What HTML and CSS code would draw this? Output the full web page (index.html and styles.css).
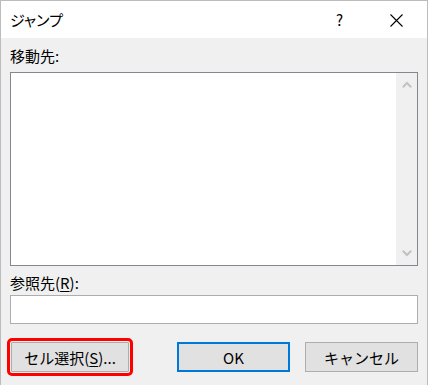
FILE: index.html
```html
<!DOCTYPE html>
<html lang="ja">
<head>
  <meta charset="UTF-8">
  <title>ジャンプ</title>
  <link rel="stylesheet" href="styles.css">
</head>
<body>
  <div class="dialog">
    <div class="title-bar">
      <span class="title">ジャンプ</span>
      <span class="help">?</span>
      <span class="close">
        <svg width="13" height="13" viewBox="0 0 13 13">
          <path d="M0.5 0.5 L12.5 12.5 M12.5 0.5 L0.5 12.5" stroke="#000" stroke-width="1.1" fill="none"/>
        </svg>
      </span>
    </div>

    <div class="content">
      <div class="label goto-label">移動先:</div>
      <div class="listbox">
        <div class="list-area"></div>
        <div class="scrollbar">
          <svg width="10" height="7" viewBox="0 0 10 7">
            <path d="M0.8 6.2 L5 2 L9.2 6.2" stroke="#c2c2c2" stroke-width="2" fill="none"/>
          </svg>
          <svg width="10" height="7" viewBox="0 0 10 7">
            <path d="M0.8 0.8 L5 5 L9.2 0.8" stroke="#c2c2c2" stroke-width="2" fill="none"/>
          </svg>
        </div>
      </div>

      <div class="label ref-label">参照先(<u>R</u>):</div>
      <div class="ref-input"></div>

      <div class="buttons">
        <button class="btn btn-special">セル選択(<u>S</u>)...</button>
        <button class="btn btn-ok">OK</button>
        <button class="btn btn-cancel">キャンセル</button>
      </div>
    </div>
  </div>
</body>
</html>
```

FILE: styles.css
```css
/* Base */
body {
  margin: 0;
  padding: 0;
  font-family: "Noto Sans CJK JP", "Noto Sans", sans-serif;
  font-feature-settings: "palt";
  color: #000;
  background-color: #f0f0f0;
}

.dialog {
  width: 428px;
  height: 385px;
  box-sizing: border-box;
  border: 1px solid #bcbcbc;
  border-bottom: none;
  background-color: #f0f0f0;
  display: flex;
  flex-direction: column;
}

/* Title bar */
.title-bar {
  height: 37px;
  background-color: #fff;
  display: flex;
  align-items: center;
  padding-left: 9px;
}

.title {
  font-size: 15px;
  flex: 1;
}

.help {
  font-size: 15px;
  width: 12px;
  margin-right: 42px;
}

.close {
  display: flex;
  width: 13px;
  height: 13px;
  margin-right: 24px;
  margin-top: 1px;
}

/* Dialog content */
.content {
  padding: 7px 9px 0 9px;
  display: flex;
  flex-direction: column;
}

.label {
  font-size: 15px;
  height: 22px;
  line-height: 22px;
}

.goto-label {
  margin-bottom: 5px;
}

.ref-label {
  margin-top: 6px;
  margin-bottom: 1px;
}

.label u {
  text-underline-offset: 2px;
}

/* List box */
.listbox {
  height: 194px;
  box-sizing: border-box;
  border: 1px solid #828790;
  background-color: #fff;
  display: flex;
}

.list-area {
  flex: 1;
}

.scrollbar {
  width: 21px;
  background-color: #f0f0f0;
  display: flex;
  flex-direction: column;
  justify-content: space-between;
  align-items: center;
  padding: 8px 0;
}

.ref-input {
  height: 29px;
  box-sizing: border-box;
  border: 1px solid #adadad;
  background-color: #fff;
}

/* Buttons */
.buttons {
  display: flex;
  margin-top: 18px;
}

.btn {
  height: 30px;
  width: 113px;
  box-sizing: border-box;
  background-color: #e1e1e1;
  border: 1px solid #adadad;
  font-family: inherit;
  font-size: 15px;
  color: #000;
  padding: 0;
}

.btn-special {
  width: 118px;
  margin-left: 1px;
  outline: 3px solid #ff0000;
  outline-offset: 1px;
  border-radius: 1px;
}

.btn-special u {
  text-underline-offset: 2px;
}

.btn-ok {
  margin-left: 48px;
  border: 2px solid #0078d7;
}

.btn-cancel {
  margin-left: 15px;
}
```
